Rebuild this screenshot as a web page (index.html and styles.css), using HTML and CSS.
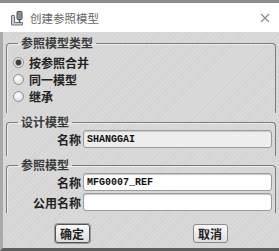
FILE: index.html
```html
<!DOCTYPE html>
<html lang="zh-CN">
<head>
    <meta charset="UTF-8">
    <meta name="viewport" content="width=device-width, initial-scale=1.0">
    <title>创建参照模型</title>
    <link rel="stylesheet" href="styles.css">
</head>
<body>
    <div class="dialog">
        <div class="titlebar">
            <svg class="app-icon" width="15" height="15" viewBox="0 0 15 15">
                <path d="M1.5 4.5 h3 v7 h8 v2.5 h-11 z" fill="#c9ccd2" stroke="#6d7078"/>
                <rect x="7" y="0.5" width="5" height="8" rx="1" fill="#8a8e96" stroke="#4a4d54"/>
                <path d="M9.5 8.5 v3" stroke="#4a4d54" stroke-width="1.5"/>
            </svg>
            <span class="title">创建参照模型</span>
            <svg class="close" width="10" height="10" viewBox="0 0 10 10">
                <path d="M1 1 L9 9 M9 1 L1 9" stroke="#8a8a8a" stroke-width="1.2"/>
            </svg>
        </div>
        <div class="content">
            <fieldset class="group type-group">
                <legend>参照模型类型</legend>
                <label class="radio"><input type="radio" name="reftype" checked><span>按参照合并</span></label>
                <label class="radio"><input type="radio" name="reftype"><span>同一模型</span></label>
                <label class="radio"><input type="radio" name="reftype"><span>继承</span></label>
            </fieldset>
            <fieldset class="group">
                <legend>设计模型</legend>
                <div class="field">
                    <label>名称</label>
                    <input class="text" type="text" value="SHANGGAI" disabled>
                </div>
            </fieldset>
            <fieldset class="group last">
                <legend>参照模型</legend>
                <div class="field">
                    <label>名称</label>
                    <input class="text" type="text" value="MFG0007_REF">
                </div>
                <div class="field">
                    <label>公用名称</label>
                    <input class="text" type="text" value="">
                </div>
            </fieldset>
            <div class="buttons">
                <button class="btn default">确定</button>
                <button class="btn">取消</button>
            </div>
        </div>
    </div>
</body>
</html>
```

FILE: styles.css
```css
body{
    margin: 0;
    padding: 0;
    font-family: "Noto Sans CJK SC", "DejaVu Sans", sans-serif;
    color: #222;
}
.dialog{
    width: 279px;
    height: 251px;
    display: flex;
    flex-direction: column;
}
.titlebar{
    height: 29px;
    border-top: 3px solid #8c8c8c;
    background-color: #fff;
    display: flex;
    align-items: center;
    padding-left: 10px;
    padding-right: 9px;
}
.app-icon{
    margin-top: 1px;
}
.title{
    margin-left: 5px;
    font-size: 11.5px;
    color: #666;
    flex: 1;
}
.close{
    margin-top: 1px;
}
.content{
    flex: 1;
    display: flex;
    flex-direction: column;
    border-left: 3px solid #a9a9a9;
    border-bottom: 3px solid #5e5e5e;
    background-color: #d6d6d6;
    background-image: repeating-linear-gradient(135deg, #d3d3d3 0 1px, #d9d9d9 1px 3px);
}
.group{
    margin: 2px 3px 0 3px;
    padding: 1px 3px 8px 0;
    border: 1px solid #7b7b7b;
    border-bottom: none;
    border-radius: 4px 4px 0 0;
    box-shadow: inset 1px 1px 0 #ececec;
    display: flex;
    flex-direction: column;
    gap: 2px;
}
.group legend{
    margin-left: 11px;
    padding: 0 3px;
    font-size: 12px;
    line-height: 14px;
    font-weight: bold;
    color: #3a3a3a;
}
.type-group{
    margin-top: 4px;
    padding-top: 4px;
    gap: 0;
}
.group.last{
    padding-bottom: 2px;
}
.radio{
    height: 17px;
    display: flex;
    align-items: center;
    font-size: 12px;
    font-weight: bold;
}
.radio input{
    appearance: none;
    margin: 0 5px 0 6px;
    width: 11px;
    height: 11px;
    border: 1px solid #8d8d8d;
    border-radius: 50%;
    background: radial-gradient(circle at 40% 35%, #fff, #d2d2d2);
}
.radio input:checked{
    background: radial-gradient(circle, #3e3e3e 0 2.5px, #9a9a9a 3px, #f4f4f4 4px, #d2d2d2);
}
.field{
    display: grid;
    grid-template-columns: 74px 1fr;
    column-gap: 2px;
    align-items: center;
}
.field label{
    text-align: right;
    font-size: 12px;
    font-weight: bold;
}
.text{
    height: 18px;
    box-sizing: border-box;
    margin: 0;
    padding: 0 3px;
    border: 1px solid #9a9a9a;
    border-radius: 3px;
    background-color: #fff;
    box-shadow: inset 0 1px 1px #c8c8c8;
    font-family: "Liberation Mono", monospace;
    font-size: 10px;
    font-weight: bold;
    color: #111;
}
.text:disabled{
    background-color: #ededed;
    color: #111;
}
.buttons{
    margin-top: 11px;
    display: grid;
    grid-template-columns: 1fr 1fr;
    justify-items: center;
}
.btn{
    width: 35px;
    height: 19px;
    padding: 0;
    border: 1px solid #8a8a8a;
    border-radius: 3px;
    background: linear-gradient(#fafafa, #dcdcdc);
    font-family: "Noto Sans CJK SC", sans-serif;
    font-size: 12px;
    font-weight: bold;
    color: #222;
}
.btn.default{
    border-color: #555;
    box-shadow: 0 0 0 1px #9a9a9a;
}
```
